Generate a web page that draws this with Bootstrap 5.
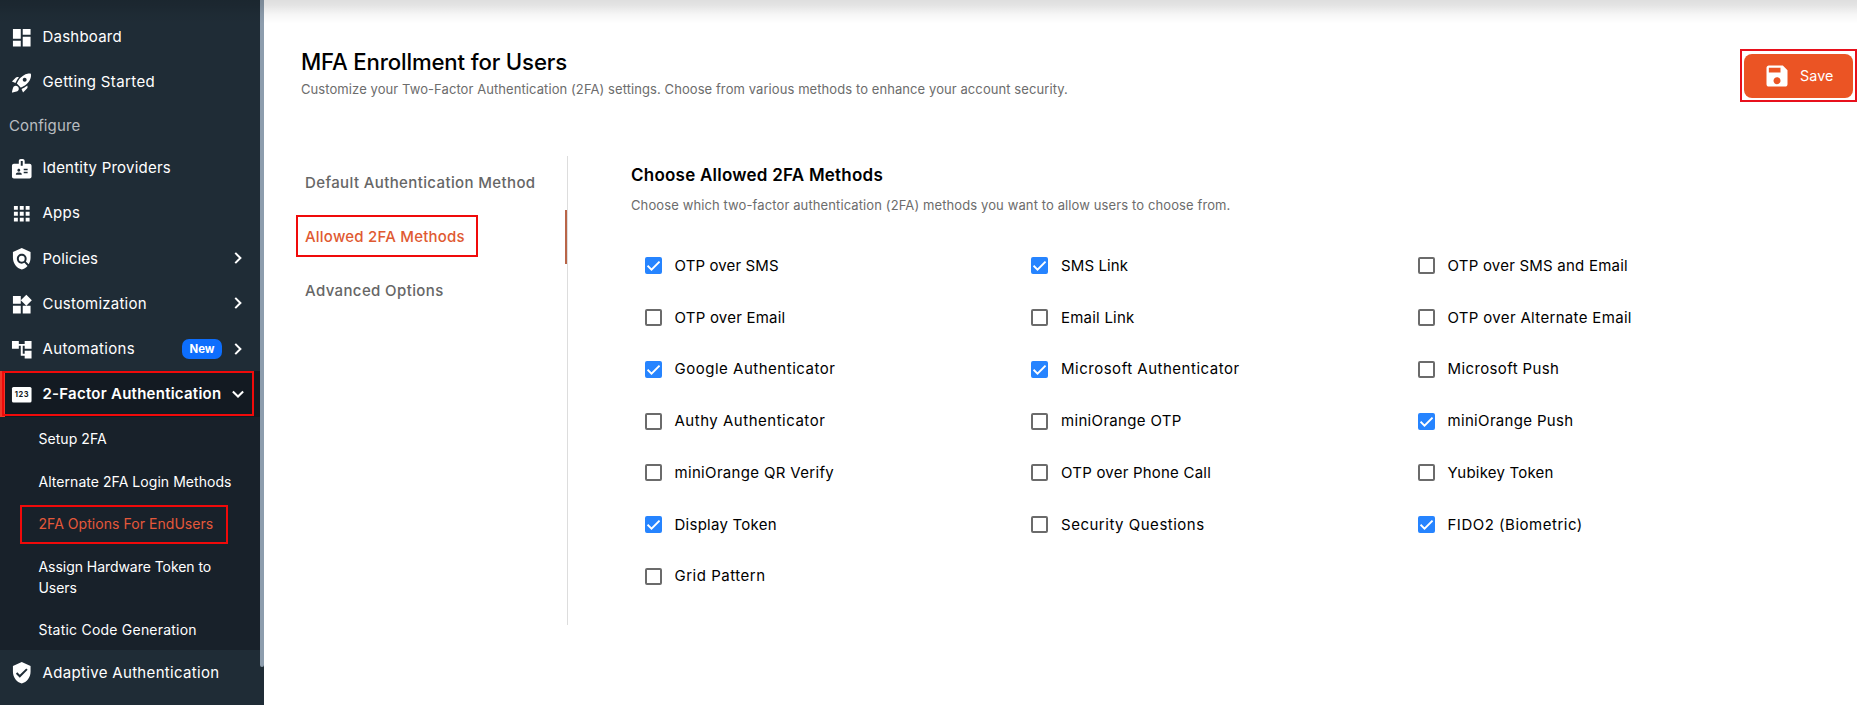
<!DOCTYPE html>
<html lang="en">
<head>
<meta charset="utf-8">
<meta name="viewport" content="width=device-width, initial-scale=1">
<title>MFA Enrollment for Users</title>
<link href="https://cdn.jsdelivr.net/npm/bootstrap@5.3.0/dist/css/bootstrap.min.css" rel="stylesheet">
<style>
body{font-family:Inter,"Liberation Sans",sans-serif;font-size:15px;line-height:1.4;color:#000;background:#fff;height:705px;overflow:hidden}
.shell{height:705px}
.top-shade{position:absolute;inset:0 0 auto 0;height:24px;background:linear-gradient(rgba(0,0,0,.13),rgba(0,0,0,.11) 20%,rgba(0,0,0,.04) 58%,rgba(0,0,0,0));pointer-events:none}
.sidebar{width:264px;background:#1f2c36;color:#fff}
.track{width:4px}
.track div{height:667px;background:#8d9dad;border-radius:0 0 2px 2px}
.menu{width:260px;padding-top:14px}
.item{height:45.25px;padding-left:10px;padding-right:11px;color:#fff;text-decoration:none}
.item>svg:first-child{width:23.5px;height:23.5px;margin-right:9px;margin-top:2px;flex:none}
.item .chev{width:22px;height:22px;flex:none}
.caption{height:40.5px;padding:10px 9px 0;color:#b9bdc0}
.item.current{background:#131a22;font-weight:600;box-shadow:inset 5px 0 #f0392a}
.submenu{background:#18212a;height:233px;padding:.7px 0 0 38.5px;font-size:14px;line-height:21px}
.submenu a{display:block;color:#fff;text-decoration:none;padding:10.8px 0}
.submenu a.on{color:#e4583a}
.new-pill{background:#0d6efd;font-size:11.4px;font-weight:700;width:40px;height:20px;line-height:20px;border-radius:7px;margin-right:5px}
.hl{position:absolute;border:2px solid #f00a0a;pointer-events:none}
.hl-group{left:2px;top:371px;width:252px;height:45px}
.hl-option{left:20px;top:505px;width:208px;height:39px}
.hl-tab{left:-5px;top:59px;width:182px;height:42px}
.content{padding:0 0 0 37px}
.page-head{height:156px;padding-top:47px}
.page-head .muted{padding-top:2px}
.page-title{font-size:22.2px;font-weight:500;line-height:30px;letter-spacing:-.15px}
.muted{color:#6c6c6c;font-size:13px;line-height:20px;letter-spacing:.08px}
.save-wrap{margin-top:2px;width:117px;height:53px;border:2px solid #e8101c;padding:3px 0 0 2px}
.save{width:108.5px;height:43.5px;border-radius:8px;background:#eb5424;border:0;color:#fff;font-size:14.3px;padding:0 0 0 18.5px;letter-spacing:.1px}
.save svg{width:28px;height:28px;margin-right:9.5px}
.tabs{width:267px;height:469px;border-right:1px solid #ddd}
.tabs a{height:54px;padding:0 0 2px 4px;color:#666;font-weight:500;text-decoration:none;margin-right:-1px}
.tabs a.on{color:#df5a32;border-right:2px solid #b96548;margin-right:0}
.panel{padding:7px 0 0 63px}
.panel-note{padding-top:8px;letter-spacing:.11px}
.panel-title{font-size:17px;font-weight:600;line-height:24px;letter-spacing:.24px}
.checks{display:grid;grid-template-columns:repeat(3,386.5px);grid-auto-rows:51.75px;margin:25px 0 0 13.5px}
.checks label{padding-bottom:1px}
.checks .box{appearance:none;width:17px;height:17px;border:2px solid #6b6b6b;border-radius:2px;margin:1px 13px 0 0;flex:none;background:#fff}
.checks .box:checked{border-color:#2684ff;background:#2684ff url("data:image/svg+xml,%3Csvg xmlns='http://www.w3.org/2000/svg' viewBox='0 0 17 17'%3E%3Cpath d='M2.6 8.7l3.9 3.9 8-8' fill='none' stroke='%23fff' stroke-width='1.9'/%3E%3C/svg%3E") center/17px}
.k0{letter-spacing:-.05px}.k05{letter-spacing:.05px}.k1{letter-spacing:.12px}.k2{letter-spacing:.22px}.k25{letter-spacing:.25px}.k3{letter-spacing:.33px}.k35{letter-spacing:.38px}.k5{letter-spacing:.51px}
</style>
<script src="https://cdn.jsdelivr.net/npm/bootstrap@5.3.0/dist/js/bootstrap.bundle.min.js"></script>
</head>
<body class="position-relative">
<svg class="d-none">
<symbol id="right" viewBox="0 0 24 24"><path fill="none" stroke="#fff" stroke-width="2.2" d="M9 6.4l5.6 5.6L9 17.6"/></symbol>
<symbol id="down" viewBox="0 0 24 24"><path fill="none" stroke="#fff" stroke-width="2.2" d="M6.4 9.2l5.6 5.6 5.6-5.6"/></symbol>
</svg>
<div class="shell d-flex">
<aside class="sidebar d-flex flex-shrink-0 position-relative">
<nav class="menu">
<a class="item d-flex align-items-center" href="#"><svg viewBox="0 0 24 24" fill="#fff"><path d="M3 13h8V3H3v10zm0 8h8v-6H3v6zm10 0h8V11h-8v10zm0-18v6h8V3h-8z"/></svg><span class="k2">Dashboard</span></a>
<a class="item d-flex align-items-center" href="#"><svg viewBox="0 0 24 24" fill="#fff"><path d="M9.19 6.35c-2.04 2.29-3.44 5.58-3.57 5.89L2 10.69l4.05-4.05c.47-.47 1.15-.68 1.81-.55l1.33.26zM11.17 17s3.74-1.55 5.89-3.7c5.4-5.4 4.5-9.62 4.21-10.57-.95-.3-5.17-1.19-10.57 4.21C8.55 9.09 7 12.83 7 12.83L11.17 17zm6.48-2.19c-2.29 2.04-5.58 3.44-5.89 3.57L13.31 22l4.05-4.05c.47-.47.68-1.15.55-1.81l-.26-1.33zM9 18c0 .83-.34 1.58-.88 2.12C6.94 21.3 2 22 2 22s.7-4.94 1.88-6.12A2.996 2.996 0 019 18zm4-9c0-1.1.9-2 2-2s2 .9 2 2-.9 2-2 2-2-.9-2-2z"/></svg><span class="k35">Getting Started</span></a>
<div class="caption k1">Configure</div>
<a class="item d-flex align-items-center" href="#"><svg viewBox="0 0 24 24" fill="#fff"><path d="M20 7h-5V4c0-1.1-.9-2-2-2h-2c-1.1 0-2 .9-2 2v3H4c-1.1 0-2 .9-2 2v11c0 1.1.9 2 2 2h16c1.1 0 2-.9 2-2V9c0-1.1-.9-2-2-2zM9 12c.83 0 1.5.67 1.5 1.5S9.83 15 9 15s-1.5-.67-1.5-1.5S8.17 12 9 12zm3 6H6v-.75c0-1 2-1.5 3-1.5s3 .5 3 1.5V18zm1-9h-2V4h2v5zm5 7.5h-4V15h4v1.5zm0-3h-4V12h4v1.5z"/></svg><span class="k2">Identity Providers</span></a>
<a class="item d-flex align-items-center" href="#"><svg viewBox="0 0 24 24" fill="#fff"><path d="M4 8h4V4H4v4zm6 12h4v-4h-4v4zm-6 0h4v-4H4v4zm0-6h4v-4H4v4zm6 0h4v-4h-4v4zm6-10v4h4V4h-4zm-6 4h4V4h-4v4zm6 6h4v-4h-4v4zm0 6h4v-4h-4v4z"/></svg><span class="k2">Apps</span></a>
<a class="item d-flex align-items-center" href="#"><svg viewBox="0 0 24 24" fill="#fff"><path d="M21 5l-9-4-9 4v6c0 5.55 3.84 10.74 9 12 2.3-.56 4.33-1.9 5.88-3.71l-3.12-3.12c-1.94 1.29-4.58 1.07-6.29-.64-1.95-1.95-1.95-5.12 0-7.07 1.95-1.95 5.12-1.95 7.07 0 1.71 1.71 1.92 4.35.64 6.29l2.9 2.9C20.29 15.69 21 13.38 21 11V5z"/><circle cx="12" cy="12" r="3"/></svg><span class="k1 me-auto">Policies</span><svg class="chev"><use href="#right"/></svg></a>
<a class="item d-flex align-items-center" href="#"><svg viewBox="0 0 24 24" fill="#fff"><path d="M13 13v8h8v-8h-8zM3 21h8v-8H3v8zM3 3v8h8V3H3zm13.66-1.31L11 7.34 16.66 13l5.66-5.66-5.66-5.65z"/></svg><span class="k2 me-auto">Customization</span><svg class="chev"><use href="#right"/></svg></a>
<a class="item d-flex align-items-center" href="#"><svg viewBox="0 0 24 24" fill="#fff"><path d="M22 11V3h-7v3H9V3H2v8h7V8h2v10h4v3h7v-8h-7v3h-2V8h2v3z"/></svg><span class="k3 me-auto">Automations</span><span class="new-pill text-center">New</span><svg class="chev"><use href="#right"/></svg></a>
<a class="item current d-flex align-items-center" href="#"><svg viewBox="0 0 24 24"><rect x="2" y="4" width="20" height="16" rx="1.6" fill="#fff"/><text x="12.2" y="14.8" text-anchor="middle" font-size="7.6" font-weight="700" letter-spacing=".6" fill="#131a22">123</text></svg><span class="k25 me-auto">2-Factor Authentication</span><svg class="chev"><use href="#down"/></svg></a>
<div class="submenu">
<a class="k05" href="#">Setup 2FA</a>
<a class="k05" href="#">Alternate 2FA Login Methods</a>
<a class="k05 on" href="#">2FA Options For EndUsers</a>
<a class="k0" href="#">Assign Hardware Token to<br>Users</a>
<a class="k2" href="#">Static Code Generation</a>
</div>
<a class="item d-flex align-items-center" href="#"><svg viewBox="0 0 24 24" fill="#fff"><path d="M12 1L3 5v6c0 5.55 3.84 10.74 9 12 5.16-1.26 9-6.45 9-12V5l-9-4zm-2 16l-4-4 1.41-1.41L10 14.17l6.59-6.59L18 9l-8 8z"/></svg><span class="k3">Adaptive Authentication</span></a>
</nav>
<div class="track"><div></div></div>
<div class="hl hl-group"></div>
<div class="hl hl-option"></div>
</aside>
<main class="content flex-grow-1">
<header class="page-head d-flex justify-content-between">
<div><h1 class="page-title mb-0">MFA Enrollment for Users</h1>
<p class="muted mb-0">Customize your Two-Factor Authentication (2FA) settings. Choose from various methods to enhance your account security.</p></div>
<div class="save-wrap"><button class="save d-flex align-items-center"><svg viewBox="0 0 24 24" fill="#fff"><path d="M17 3H5c-1.11 0-2 .9-2 2v14c0 1.1.89 2 2 2h14c1.1 0 2-.9 2-2V7l-4-4zm-5 16c-1.66 0-3-1.34-3-3s1.34-3 3-3 3 1.34 3 3-1.34 3-3 3zm3-10H5V5h10v4z"/></svg>Save</button></div>
</header>
<div class="d-flex">
<nav class="tabs position-relative flex-shrink-0">
<a class="d-flex align-items-center k35" href="#">Default Authentication Method</a>
<a class="d-flex align-items-center k2 on" href="#">Allowed 2FA Methods</a>
<a class="d-flex align-items-center k35" href="#">Advanced Options</a>
<div class="hl hl-tab"></div>
</nav>
<section class="panel">
<h2 class="panel-title mb-0">Choose Allowed 2FA Methods</h2>
<p class="muted panel-note mb-0">Choose which two-factor authentication (2FA) methods you want to allow users to choose from.</p>
<div class="checks">
<label class="d-flex align-items-center k1"><input type="checkbox" class="box" checked>OTP over SMS</label>
<label class="d-flex align-items-center k1"><input type="checkbox" class="box" checked>SMS Link</label>
<label class="d-flex align-items-center k2"><input type="checkbox" class="box">OTP over SMS and Email</label>
<label class="d-flex align-items-center k2"><input type="checkbox" class="box">OTP over Email</label>
<label class="d-flex align-items-center k2"><input type="checkbox" class="box">Email Link</label>
<label class="d-flex align-items-center k3"><input type="checkbox" class="box">OTP over Alternate Email</label>
<label class="d-flex align-items-center k5"><input type="checkbox" class="box" checked>Google Authenticator</label>
<label class="d-flex align-items-center k5"><input type="checkbox" class="box" checked>Microsoft Authenticator</label>
<label class="d-flex align-items-center k35"><input type="checkbox" class="box">Microsoft Push</label>
<label class="d-flex align-items-center k5"><input type="checkbox" class="box">Authy Authenticator</label>
<label class="d-flex align-items-center k3"><input type="checkbox" class="box">miniOrange OTP</label>
<label class="d-flex align-items-center k3"><input type="checkbox" class="box" checked>miniOrange Push</label>
<label class="d-flex align-items-center k3"><input type="checkbox" class="box">miniOrange QR Verify</label>
<label class="d-flex align-items-center k2"><input type="checkbox" class="box">OTP over Phone Call</label>
<label class="d-flex align-items-center k2"><input type="checkbox" class="box">Yubikey Token</label>
<label class="d-flex align-items-center k25"><input type="checkbox" class="box" checked>Display Token</label>
<label class="d-flex align-items-center k5"><input type="checkbox" class="box">Security Questions</label>
<label class="d-flex align-items-center k5"><input type="checkbox" class="box" checked>FIDO2 (Biometric)</label>
<label class="d-flex align-items-center k5"><input type="checkbox" class="box">Grid Pattern</label>
</div>
</section>
</div>
</main>
</div>
<div class="top-shade"></div>
</body>
</html>
